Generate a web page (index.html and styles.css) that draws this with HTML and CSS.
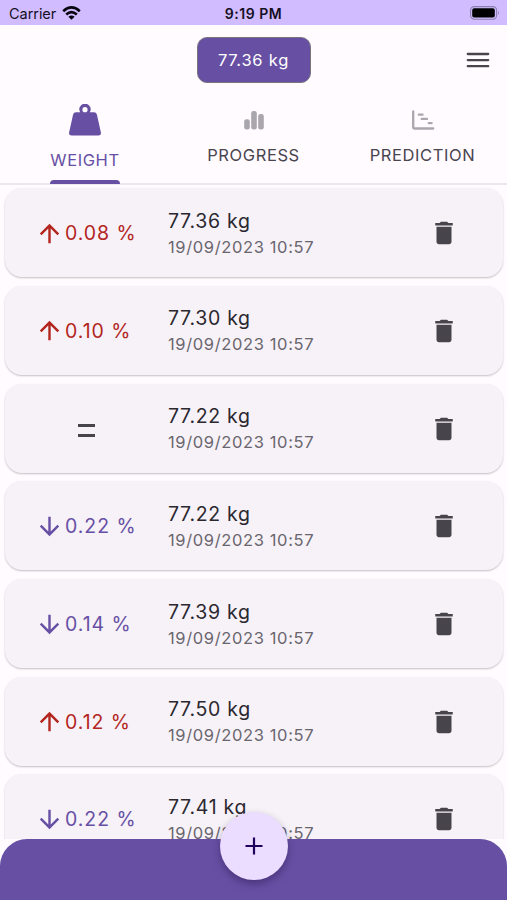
FILE: index.html
```
<!DOCTYPE html>
<html lang="en">
<head>
<meta charset="utf-8">
<title>Weight</title>
<link rel="stylesheet" href="styles.css">
</head>
<body>
<svg class="defs" width="0" height="0">
  <symbol id="up" viewBox="0 0 24 24"><path d="M4 12l1.41 1.41L11 7.83V20h2V7.83l5.58 5.59L20 12l-8-8-8 8z"/></symbol>
  <symbol id="down" viewBox="0 0 24 24"><path d="M20 12l-1.41-1.41L13 16.17V4h-2v12.17l-5.58-5.59L4 12l8 8 8-8z"/></symbol>
  <symbol id="trash" viewBox="0 0 24 24"><path d="M6 19c0 1.100.9 2 2 2h8c1.100 0 2-.9 2-2V7H6v12zM19 4h-3.500l-1-1h-5l-1 1H5v2h14V4z"/></symbol>
</svg>
<div class="app">
  <div class="status">
    <div class="carrier"><span>Carrier</span>
      <svg width="19" height="14" viewBox="0 0 19 14" fill="none" stroke="#08050f" stroke-width="2.600"><path d="M1.200 5.200Q9.500-2.300 17.800 5.200M4.200 8.500Q9.500 3.800 14.800 8.500"/><path d="M6.400 10.700Q9.500 8.200 12.600 10.700L9.500 13.700z" fill="#08050f" stroke="none"/></svg>
    </div>
    <div class="time">9:19 PM</div>
    <svg class="battery" width="30" height="14" viewBox="0 0 30 14"><rect x=".6" y=".6" width="26" height="12.600" rx="3.600" fill="none" stroke="#8c7fae" stroke-width="1.100"/><rect x="2.200" y="2.300" width="22.600" height="9.200" rx="2" fill="#000"/><path d="M28 4.800q1.800 2.100 0 4.200z" fill="#8c7fae"/></svg>
  </div>
  <header class="header">
    <div class="current">77.36 kg</div>
    <svg class="menu" width="24" height="16" viewBox="0 0 24 16" stroke="#47444b" stroke-width="2.300" stroke-linecap="round"><path d="M1.800 2h20.400M1.800 8.100h20.400M1.800 14.200h20.400"/></svg>
  </header>
  <nav class="tabs">
    <div class="tab active">
      <svg width="32" height="32" viewBox="0 0 32 32"><path fill-rule="evenodd" d="M11.200 8.200a5.600 5.600 0 1 1 9.600 0H25q2.300 0 2.900 2.200l4 18q.6 3.100-2.500 3.100H2.600q-3.100 0-2.500-3.100l4-18Q4.700 8.200 7 8.200zM16 3.100a2.600 2.600 0 1 0 0 5.200 2.600 2.600 0 0 0 0-5.200z"/></svg>
      <span>WEIGHT</span>
    </div>
    <div class="tab">
      <svg width="22" height="22" viewBox="0 0 22 22"><rect x="1.200" y="10.300" width="5.600" height="10.200" rx="2.300"/><rect x="8.200" y="2" width="5.600" height="18.500" rx="2.300"/><rect x="15.200" y="5" width="5.600" height="15.500" rx="2.300"/></svg>
      <span>PROGRESS</span>
    </div>
    <div class="tab">
      <svg class="outline" width="24" height="22" viewBox="0 0 24 22"><path d="M2.200 2.500v15.400q0 1.600 1.600 1.600h18.400M7.800 5.700h3.800M10.700 9.900h5.300M17.700 14.100h3"/></svg>
      <span>PREDICTION</span>
    </div>
  </nav>
  <main class="list">
    <article class="card"><div class="change rise"><svg><use href="#up"/></svg><span>0.08 %</span></div><div class="info"><b>77.36 kg</b><time>19/09/2023 10:57</time></div><svg class="trash"><use href="#trash"/></svg></article>
    <article class="card"><div class="change rise"><svg><use href="#up"/></svg><span>0.10 %</span></div><div class="info"><b>77.30 kg</b><time>19/09/2023 10:57</time></div><svg class="trash"><use href="#trash"/></svg></article>
    <article class="card"><div class="change same"><i></i></div><div class="info"><b>77.22 kg</b><time>19/09/2023 10:57</time></div><svg class="trash"><use href="#trash"/></svg></article>
    <article class="card"><div class="change fall"><svg><use href="#down"/></svg><span>0.22 %</span></div><div class="info"><b>77.22 kg</b><time>19/09/2023 10:57</time></div><svg class="trash"><use href="#trash"/></svg></article>
    <article class="card"><div class="change fall"><svg><use href="#down"/></svg><span>0.14 %</span></div><div class="info"><b>77.39 kg</b><time>19/09/2023 10:57</time></div><svg class="trash"><use href="#trash"/></svg></article>
    <article class="card"><div class="change rise"><svg><use href="#up"/></svg><span>0.12 %</span></div><div class="info"><b>77.50 kg</b><time>19/09/2023 10:57</time></div><svg class="trash"><use href="#trash"/></svg></article>
    <article class="card"><div class="change fall"><svg><use href="#down"/></svg><span>0.22 %</span></div><div class="info"><b>77.41 kg</b><time>19/09/2023 10:57</time></div><svg class="trash"><use href="#trash"/></svg></article>
  </main>
  <footer class="bar">
    <div class="add"><svg width="18" height="18" viewBox="0 0 18 18" stroke="#21005d" stroke-width="2.200"><path d="M0.500 9h17M9 .5v17"/></svg></div>
  </footer>
</div>
</body>
</html>
```
FILE: styles.css
```
* { box-sizing: border-box; }
body { margin: 0; font-family: Inter, "Liberation Sans", sans-serif; background: #fffbff; }
.defs { position: absolute; }
.app { width: 507px; height: 900px; display: flex; flex-direction: column; overflow: hidden; }
.status {
  height: 25px; flex: none; background: #d0bcff; color: #15101f;
  display: grid; grid-template-columns: 1fr auto 1fr; align-items: center;
  padding: 2px 7px 0 9px; font-size: 14.5px;
}
.carrier { display: flex; align-items: center; gap: 6px; letter-spacing: -0.05px; }
.carrier svg { margin-top: -2px; }
.time { font-weight: 600; font-size: 14px; letter-spacing: 0.5px; margin-left: -2px; }
.battery { justify-self: end; margin-top: -2px; }
.header {
  height: 70px; flex: none; display: grid; grid-template-columns: 1fr auto 1fr;
  align-items: center; padding: 0 17px 1px;
}
.current {
  grid-column: 2; width: 114px; height: 46px; border-radius: 10px;
  border: 1px solid #79747e; background: #6750a4; color: #fff;
  font-size: 16.5px; letter-spacing: 0.75px; line-height: 45px; text-align: center;
}
.menu { justify-self: end; }
.tabs {
  height: 90px; flex: none; display: grid; grid-template-columns: repeat(3, 1fr);
  border-bottom: 2px solid #ece7ee;
}
.tab {
  display: flex; flex-direction: column; align-items: center;
  padding-top: 14px; color: #49454f; font-size: 16.5px; letter-spacing: 0.6px;
}
.tab svg { fill: #aaa6ae; flex: none; }
.tab .outline { fill: none; stroke: #aaa6ae; stroke-width: 2.300; stroke-linecap: round; }
.tab span { margin-top: 13px; line-height: 22px; }
.tab.active { padding-top: 9px; color: #6750a4; padding-left: 1px; }
.tab.active svg { fill: #6750a4; }
.tab.active span { padding-bottom: 10px; position: relative; }
.tab.active span::after {
  content: ""; position: absolute; left: 0; right: 0; bottom: -3px;
  height: 4px; border-radius: 4px 4px 0 0; background: #6750a4;
}
.list {
  flex: 1; min-height: 0; overflow: hidden; padding: 3.3px 4px 0 5px;
  display: flex; flex-direction: column; gap: 8.7px;
}
.card {
  height: 89px; flex: none; border-radius: 17px; background: #f7f2f8;
  display: grid; grid-template-columns: 163px 1fr 30px; align-items: center;
  padding: 1px 44px 0 0; box-shadow: 0 1px 2px rgba(0, 0, 0, 0.24);
}
.change { display: flex; align-items: center; padding-left: 30px; gap: 1px; font-size: 19.5px; letter-spacing: 0.95px; fill: currentColor; }
.change svg { width: 29px; height: 29px; }
.rise { color: #b3261e; }
.fall { color: #6750a4; }
.same { padding-left: 73px; padding-top: 3px; }
.same i { width: 17px; height: 13px; border: solid #47444b; border-width: 3px 0; }
.info { display: flex; flex-direction: column; padding-top: 1px; color: #2b282f; }
.info b { font-weight: 400; font-size: 19.5px; line-height: 26px; letter-spacing: 0.7px; }
.info time { font-size: 16.5px; line-height: 26px; letter-spacing: 0.63px; color: #6a666e; }
.trash { width: 30px; height: 30px; fill: #47444c; }
.bar {
  height: 61px; flex: none; border-radius: 27px 27px 0 0; background: #6750a4;
  display: flex; justify-content: center; position: relative;
}
.add {
  width: 68px; height: 68px; margin-top: -27px; border-radius: 50%; background: #eaddff;
  display: grid; place-items: center; box-shadow: 0 4px 8px rgba(20, 0, 50, 0.35);
}
```
